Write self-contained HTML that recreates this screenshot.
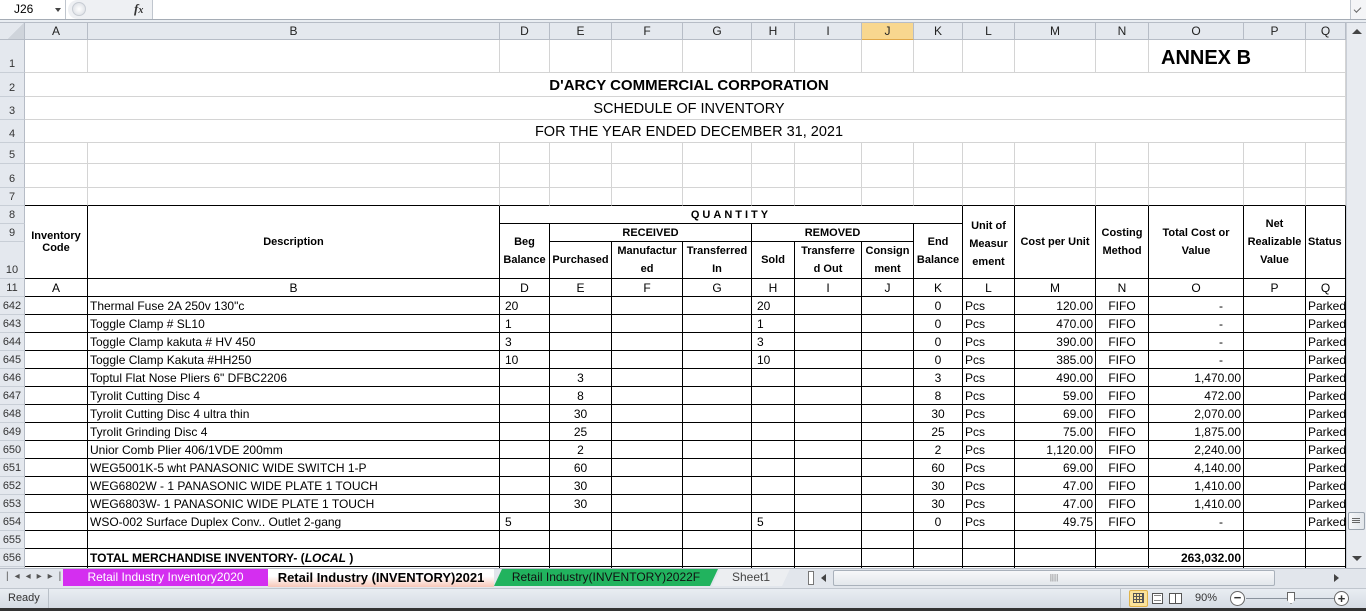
<!DOCTYPE html>
<html><head><meta charset="utf-8">
<style>
*{margin:0;padding:0;box-sizing:border-box}
body{width:1366px;height:611px;overflow:hidden;background:#fff;font-family:"Liberation Sans",Arial,sans-serif;font-size:11px;color:#000;position:relative}
.abs{position:absolute}
#fbar{left:0;top:0;width:1366px;height:20px;background:#fff;border-bottom:1px solid #a5acb5}
#gap{left:0;top:20px;width:1366px;height:3px;background:#e9edf2;border-bottom:1px solid #b6bcc6}
#grid{left:0;top:23px;width:1346px;height:545px;overflow:hidden}
table{border-collapse:separate;border-spacing:0;table-layout:fixed;width:1346px}
td{border-right:1px solid #d4d4d4;border-bottom:1px solid #d4d4d4;padding:0 2px;white-space:nowrap;overflow:hidden;vertical-align:middle;line-height:12px}
tr.d td{font-size:12px}
tr.d td.rh{font-size:11px}
td.h{background:#e4e8ee;border-right:1px solid #b6bcc6;border-bottom:1px solid #b6bcc6;text-align:center;color:#222;padding:0;font-size:12px}
td.rh{background:#e4e8ee;border-right:1px solid #b6bcc6;border-bottom:1px solid #c8ced6;text-align:center;color:#333;padding:0;vertical-align:bottom;line-height:16px}
td.sel{background:#f8d78f;border-bottom:1px solid #e0a84a}
td.k{border-right-color:#000;border-bottom-color:#000}
td.kb{border-bottom-color:#000}
td.p{padding-left:5px}
.c{text-align:center}.r{text-align:right}.b{font-weight:bold}
.w{white-space:normal}
tr.d{height:18px}
#vs{left:1346px;top:23px;width:20px;height:545px;background:#e8ebf0;border-left:1px solid #c9ced6}
#tabs{left:0;top:568px;width:1366px;height:20px;background:#e2e6ec;border-top:1px solid #b6bcc6}
#status{left:0;top:588px;width:1366px;height:20px;background:linear-gradient(#e9edf2,#d6dce4);border-top:1px solid #c0c6ce}
#edge{left:0;top:608px;width:1366px;height:3px;background:#333}
</style></head><body>

<div id="fbar" class="abs">
  <div class="abs" style="left:0;top:0;width:66px;height:19px;border-right:1px solid #c0c6ce;font-size:12px;line-height:18px;padding-left:14px">J26</div>
  <div class="abs" style="left:55px;top:8px;width:0;height:0;border-left:3px solid transparent;border-right:3px solid transparent;border-top:4px solid #444"></div>
  <div class="abs" style="left:68px;top:0;width:85px;height:19px;background:#eef0f3;border-right:1px solid #c0c6ce;border-radius:10px 0 0 10px"></div>
  <div class="abs" style="left:72px;top:2px;width:14px;height:14px;border-radius:7px;background:radial-gradient(#fff,#d6dae0);border:1px solid #c7ccd3"></div>
  <div class="abs" style="left:134px;top:1px;font-family:'Liberation Serif',serif;font-style:italic;font-weight:bold;font-size:13px;color:#333">f<span style="font-size:10px">x</span></div>
  <div class="abs" style="left:1350px;top:0;width:16px;height:19px;border-left:1px solid #c0c6ce;background:#f4f5f7"></div>
  <div class="abs" style="left:1354px;top:7px;width:7px;height:4px;border-left:1px solid #666;border-bottom:1px solid #666;transform:rotate(-45deg)"></div>
</div>
<div id="gap" class="abs"></div>

<div id="grid" class="abs">
<table>
<colgroup><col style="width:25px"><col style="width:63px"><col style="width:412px"><col style="width:50px"><col style="width:62px"><col style="width:71px"><col style="width:69px"><col style="width:43px"><col style="width:67px"><col style="width:52px"><col style="width:49px"><col style="width:52px"><col style="width:81px"><col style="width:53px"><col style="width:95px"><col style="width:62px"><col style="width:40px"></colgroup>
<tr style="height:17px"><td class="h" style="background:linear-gradient(135deg,#e4e8ee 60%,#cfd4db 60%)"></td><td class="h">A</td><td class="h">B</td><td class="h">D</td><td class="h">E</td><td class="h">F</td><td class="h">G</td><td class="h">H</td><td class="h">I</td><td class="h sel">J</td><td class="h">K</td><td class="h">L</td><td class="h">M</td><td class="h">N</td><td class="h">O</td><td class="h">P</td><td class="h">Q</td></tr>
<tr style="height:33px"><td class="rh">1</td><td></td><td></td><td></td><td></td><td></td><td></td><td></td><td></td><td></td><td></td><td></td><td></td><td></td><td colspan="2" style="font-size:20px;font-weight:bold;padding-left:12px;line-height:22px;vertical-align:bottom;padding-bottom:3px">ANNEX B</td><td></td></tr>
<tr style="height:24px"><td class="rh">2</td><td colspan="16" class="c b" style="font-size:15px;line-height:18px;padding-left:10px;vertical-align:bottom;padding-bottom:1px">D'ARCY COMMERCIAL CORPORATION</td></tr>
<tr style="height:23px"><td class="rh">3</td><td colspan="16" class="c" style="font-size:14.5px;line-height:18px;padding-left:10px;vertical-align:bottom;padding-bottom:1px">SCHEDULE OF INVENTORY</td></tr>
<tr style="height:23px"><td class="rh">4</td><td colspan="16" class="c" style="font-size:14.5px;line-height:18px;padding-left:10px;vertical-align:bottom;padding-bottom:1px">FOR THE YEAR ENDED DECEMBER 31, 2021</td></tr>
<tr style="height:21px"><td class="rh">5</td><td></td><td></td><td></td><td></td><td></td><td></td><td></td><td></td><td></td><td></td><td></td><td></td><td></td><td></td><td></td><td></td></tr>
<tr style="height:24px"><td class="rh">6</td><td></td><td></td><td></td><td></td><td></td><td></td><td></td><td></td><td></td><td></td><td></td><td></td><td></td><td></td><td></td><td></td></tr>
<tr style="height:18px"><td class="rh">7</td><td class="kb"></td><td class="kb"></td><td class="kb"></td><td class="kb"></td><td class="kb"></td><td class="kb"></td><td class="kb"></td><td class="kb"></td><td class="kb"></td><td class="kb"></td><td class="kb"></td><td class="kb"></td><td class="kb"></td><td class="kb"></td><td class="kb"></td><td class="kb"></td></tr>
<tr style="height:18px"><td class="rh">8</td>
<td rowspan="3" class="k c b w">Inventory<br>Code</td>
<td rowspan="3" class="k c b">Description</td>
<td colspan="8" class="k c b" style="letter-spacing:3px">QUANTITY</td>
<td rowspan="3" class="k c b w" style="line-height:18px;padding-top:4px">Unit of<br>Measur<br>ement</td>
<td rowspan="3" class="k c b">Cost per Unit</td>
<td rowspan="3" class="k c b w" style="line-height:18px">Costing<br>Method</td>
<td rowspan="3" class="k c b w" style="line-height:18px">Total Cost or<br>Value</td>
<td rowspan="3" class="k c b w" style="line-height:18px">Net<br>Realizable<br>Value</td>
<td rowspan="3" class="k b">Status</td>
</tr>
<tr style="height:18px"><td class="rh">9</td>
<td rowspan="2" class="k c b w" style="line-height:18px">Beg<br>Balance</td>
<td colspan="3" class="k c b">RECEIVED</td>
<td colspan="3" class="k c b">REMOVED</td>
<td rowspan="2" class="k c b w" style="line-height:18px">End<br>Balance</td>
</tr>
<tr style="height:36px"><td class="rh">10</td>
<td class="k c b">Purchased</td>
<td class="k c b w" style="line-height:18px">Manufactur<br>ed</td>
<td class="k c b w" style="line-height:18px">Transferred<br>In</td>
<td class="k c b">Sold</td>
<td class="k c b w" style="line-height:18px">Transferre<br>d Out</td>
<td class="k c b w" style="line-height:18px">Consign<br>ment</td>
</tr>
<tr class="d"><td class="rh">11</td><td class="k c">A</td><td class="k c">B</td><td class="k c">D</td><td class="k c">E</td><td class="k c">F</td><td class="k c">G</td><td class="k c">H</td><td class="k c">I</td><td class="k c">J</td><td class="k c">K</td><td class="k c">L</td><td class="k c">M</td><td class="k c">N</td><td class="k c">O</td><td class="k c">P</td><td class="k c">Q</td></tr>

<tr class="d"><td class="rh">642</td><td class="k"></td><td class="k">Thermal Fuse 2A 250v 130"c</td><td class="k p">20</td><td class="k"></td><td class="k"></td><td class="k"></td><td class="k p">20</td><td class="k"></td><td class="k"></td><td class="k c">0</td><td class="k">Pcs</td><td class="k r">120.00</td><td class="k c">FIFO</td><td class="k r" style="padding-right:20px">-</td><td class="k"></td><td class="k">Parked</td></tr>
<tr class="d"><td class="rh">643</td><td class="k"></td><td class="k">Toggle Clamp # SL10</td><td class="k p">1</td><td class="k"></td><td class="k"></td><td class="k"></td><td class="k p">1</td><td class="k"></td><td class="k"></td><td class="k c">0</td><td class="k">Pcs</td><td class="k r">470.00</td><td class="k c">FIFO</td><td class="k r" style="padding-right:20px">-</td><td class="k"></td><td class="k">Parked</td></tr>
<tr class="d"><td class="rh">644</td><td class="k"></td><td class="k">Toggle Clamp kakuta # HV 450</td><td class="k p">3</td><td class="k"></td><td class="k"></td><td class="k"></td><td class="k p">3</td><td class="k"></td><td class="k"></td><td class="k c">0</td><td class="k">Pcs</td><td class="k r">390.00</td><td class="k c">FIFO</td><td class="k r" style="padding-right:20px">-</td><td class="k"></td><td class="k">Parked</td></tr>
<tr class="d"><td class="rh">645</td><td class="k"></td><td class="k">Toggle Clamp Kakuta #HH250</td><td class="k p">10</td><td class="k"></td><td class="k"></td><td class="k"></td><td class="k p">10</td><td class="k"></td><td class="k"></td><td class="k c">0</td><td class="k">Pcs</td><td class="k r">385.00</td><td class="k c">FIFO</td><td class="k r" style="padding-right:20px">-</td><td class="k"></td><td class="k">Parked</td></tr>
<tr class="d"><td class="rh">646</td><td class="k"></td><td class="k">Toptul Flat Nose Pliers 6" DFBC2206</td><td class="k"></td><td class="k c">3</td><td class="k"></td><td class="k"></td><td class="k"></td><td class="k"></td><td class="k"></td><td class="k c">3</td><td class="k">Pcs</td><td class="k r">490.00</td><td class="k c">FIFO</td><td class="k r">1,470.00</td><td class="k"></td><td class="k">Parked</td></tr>
<tr class="d"><td class="rh">647</td><td class="k"></td><td class="k">Tyrolit Cutting Disc 4</td><td class="k"></td><td class="k c">8</td><td class="k"></td><td class="k"></td><td class="k"></td><td class="k"></td><td class="k"></td><td class="k c">8</td><td class="k">Pcs</td><td class="k r">59.00</td><td class="k c">FIFO</td><td class="k r">472.00</td><td class="k"></td><td class="k">Parked</td></tr>
<tr class="d"><td class="rh">648</td><td class="k"></td><td class="k">Tyrolit Cutting Disc 4 ultra thin</td><td class="k"></td><td class="k c">30</td><td class="k"></td><td class="k"></td><td class="k"></td><td class="k"></td><td class="k"></td><td class="k c">30</td><td class="k">Pcs</td><td class="k r">69.00</td><td class="k c">FIFO</td><td class="k r">2,070.00</td><td class="k"></td><td class="k">Parked</td></tr>
<tr class="d"><td class="rh">649</td><td class="k"></td><td class="k">Tyrolit Grinding Disc 4</td><td class="k"></td><td class="k c">25</td><td class="k"></td><td class="k"></td><td class="k"></td><td class="k"></td><td class="k"></td><td class="k c">25</td><td class="k">Pcs</td><td class="k r">75.00</td><td class="k c">FIFO</td><td class="k r">1,875.00</td><td class="k"></td><td class="k">Parked</td></tr>
<tr class="d"><td class="rh">650</td><td class="k"></td><td class="k">Unior Comb Plier 406/1VDE 200mm</td><td class="k"></td><td class="k c">2</td><td class="k"></td><td class="k"></td><td class="k"></td><td class="k"></td><td class="k"></td><td class="k c">2</td><td class="k">Pcs</td><td class="k r">1,120.00</td><td class="k c">FIFO</td><td class="k r">2,240.00</td><td class="k"></td><td class="k">Parked</td></tr>
<tr class="d"><td class="rh">651</td><td class="k"></td><td class="k">WEG5001K-5 wht PANASONIC WIDE SWITCH 1-P</td><td class="k"></td><td class="k c">60</td><td class="k"></td><td class="k"></td><td class="k"></td><td class="k"></td><td class="k"></td><td class="k c">60</td><td class="k">Pcs</td><td class="k r">69.00</td><td class="k c">FIFO</td><td class="k r">4,140.00</td><td class="k"></td><td class="k">Parked</td></tr>
<tr class="d"><td class="rh">652</td><td class="k"></td><td class="k">WEG6802W - 1 PANASONIC WIDE PLATE 1 TOUCH</td><td class="k"></td><td class="k c">30</td><td class="k"></td><td class="k"></td><td class="k"></td><td class="k"></td><td class="k"></td><td class="k c">30</td><td class="k">Pcs</td><td class="k r">47.00</td><td class="k c">FIFO</td><td class="k r">1,410.00</td><td class="k"></td><td class="k">Parked</td></tr>
<tr class="d"><td class="rh">653</td><td class="k"></td><td class="k">WEG6803W- 1 PANASONIC WIDE PLATE 1 TOUCH</td><td class="k"></td><td class="k c">30</td><td class="k"></td><td class="k"></td><td class="k"></td><td class="k"></td><td class="k"></td><td class="k c">30</td><td class="k">Pcs</td><td class="k r">47.00</td><td class="k c">FIFO</td><td class="k r">1,410.00</td><td class="k"></td><td class="k">Parked</td></tr>
<tr class="d"><td class="rh">654</td><td class="k"></td><td class="k">WSO-002 Surface Duplex Conv.. Outlet 2-gang</td><td class="k p">5</td><td class="k"></td><td class="k"></td><td class="k"></td><td class="k p">5</td><td class="k"></td><td class="k"></td><td class="k c">0</td><td class="k">Pcs</td><td class="k r">49.75</td><td class="k c">FIFO</td><td class="k r" style="padding-right:20px">-</td><td class="k"></td><td class="k">Parked</td></tr>
<tr class="d"><td class="rh">655</td><td class="k"></td><td class="k"></td><td class="k"></td><td class="k"></td><td class="k"></td><td class="k"></td><td class="k"></td><td class="k"></td><td class="k"></td><td class="k"></td><td class="k"></td><td class="k"></td><td class="k"></td><td class="k"></td><td class="k"></td><td class="k"></td></tr>
<tr class="d"><td class="rh">656</td><td class="k"></td><td class="k b">TOTAL MERCHANDISE INVENTORY- (<i>LOCAL</i> )</td><td class="k"></td><td class="k"></td><td class="k"></td><td class="k"></td><td class="k"></td><td class="k"></td><td class="k"></td><td class="k"></td><td class="k"></td><td class="k"></td><td class="k"></td><td class="k r b">263,032.00</td><td class="k"></td><td class="k"></td></tr>
<tr class="d"><td class="rh">657</td><td class="k"></td><td class="k"></td><td class="k"></td><td class="k"></td><td class="k"></td><td class="k"></td><td class="k"></td><td class="k"></td><td class="k"></td><td class="k"></td><td class="k"></td><td class="k"></td><td class="k"></td><td class="k"></td><td class="k"></td><td class="k"></td></tr>
</table>
</div>

<div id="vs" class="abs">
  <div class="abs" style="left:5px;top:6px;width:0;height:0;border-left:5px solid transparent;border-right:5px solid transparent;border-bottom:5px solid #444"></div>
  <div class="abs" style="left:1px;top:489px;width:17px;height:18px;background:linear-gradient(90deg,#f6f7f9,#e1e5ea);border:1px solid #9aa3ae;border-radius:2px"></div>
  <div class="abs" style="left:5px;top:495px;width:8px;height:5px;border-top:1px solid #666;border-bottom:1px solid #666"></div>
  <div class="abs" style="left:5px;top:497px;width:8px;height:1px;background:#666"></div>
  <div class="abs" style="left:5px;top:533px;width:0;height:0;border-left:5px solid transparent;border-right:5px solid transparent;border-top:5px solid #444"></div>
</div>

<div id="tabs" class="abs">
  <div class="abs" style="left:6px;top:2px;font-size:10px;color:#555;letter-spacing:6px">|◂◂▸▸|</div>
  <div class="abs" style="left:63px;top:0;width:205px;height:17px;background:#d42ef0;color:#fff;font-size:12px;line-height:16px;text-align:center">Retail Industry Inventory2020</div>
  <div class="abs" style="left:268px;top:0;width:226px;height:18px;background:linear-gradient(#fff 40%,#f8c7b8);color:#000;font-weight:bold;font-size:13px;line-height:17px;text-align:center">Retail Industry (INVENTORY)2021</div>
  <div class="abs" style="left:494px;top:0;width:224px;height:17px;background:#21b35e;color:#111;font-size:12px;line-height:16px;text-align:center;clip-path:polygon(8px 0,100% 0,calc(100% - 8px) 100%,0 100%)">Retail Industry(INVENTORY)2022F</div>
  <div class="abs" style="left:712px;top:0;width:78px;height:17px;background:#eceef1;color:#444;font-size:12px;line-height:16px;text-align:center;clip-path:polygon(8px 0,100% 0,calc(100% - 8px) 100%,0 100%)">Sheet1</div>
  <div class="abs" style="left:808px;top:2px;width:6px;height:14px;border:1px solid #777;background:#fff"></div>
  <div class="abs" style="left:821px;top:5px;width:0;height:0;border-top:4px solid transparent;border-bottom:4px solid transparent;border-right:5px solid #444"></div>
  <div class="abs" style="left:833px;top:1px;width:442px;height:16px;background:linear-gradient(#f7f8fa,#e3e7ec);border:1px solid #a9b1bb;border-radius:2px;text-align:center;font-size:8px;color:#777;line-height:14px">||||</div>
  <div class="abs" style="left:1334px;top:5px;width:0;height:0;border-top:4px solid transparent;border-bottom:4px solid transparent;border-left:5px solid #444"></div>
</div>

<div id="status" class="abs">
  <div class="abs" style="left:8px;top:3px;font-size:11px;color:#333">Ready</div>
  <div class="abs" style="left:48px;top:0;width:1px;height:19px;background:#b9c0c8"></div>
  <div class="abs" style="left:1120px;top:0;width:1px;height:19px;background:#b9c0c8"></div>
  <div class="abs" style="left:1129px;top:1px;width:19px;height:17px;background:#fbe39a;border:1px solid #e0b34a;border-radius:2px"></div>
  <div class="abs" style="left:1133px;top:4px;width:11px;height:10px;border:1px solid #555;background:repeating-linear-gradient(90deg,transparent 0 2px,#555 2px 3px),repeating-linear-gradient(0deg,transparent 0 2px,#555 2px 3px)"></div>
  <div class="abs" style="left:1152px;top:4px;width:11px;height:11px;border:1px solid #555;background:#fff"></div>
  <div class="abs" style="left:1154px;top:6px;width:7px;height:6px;border-top:1px solid #888;border-bottom:1px solid #888"></div>
  <div class="abs" style="left:1169px;top:4px;width:13px;height:11px;border:1px solid #555;background:linear-gradient(90deg,#fff 45%,#555 45% 55%,#fff 55%)"></div>
  <div class="abs" style="left:1195px;top:3px;font-size:11px;color:#333">90%</div>
  <div class="abs" style="left:1230px;top:2px;width:15px;height:15px;border-radius:8px;border:1px solid #666;background:#fff;text-align:center;line-height:12px;font-weight:bold;font-size:13px;color:#333">−</div>
  <div class="abs" style="left:1246px;top:9px;width:88px;height:1px;background:#8a929c"></div>
  <div class="abs" style="left:1287px;top:3px;width:8px;height:12px;background:#fff;border:1px solid #666;clip-path:polygon(0 0,100% 0,100% 70%,50% 100%,0 70%)"></div>
  <div class="abs" style="left:1334px;top:2px;width:15px;height:15px;border-radius:8px;border:1px solid #666;background:#fff;text-align:center;line-height:13px;font-weight:bold;font-size:13px;color:#333">+</div>
</div>
<div id="edge" class="abs"></div>
</body></html>
